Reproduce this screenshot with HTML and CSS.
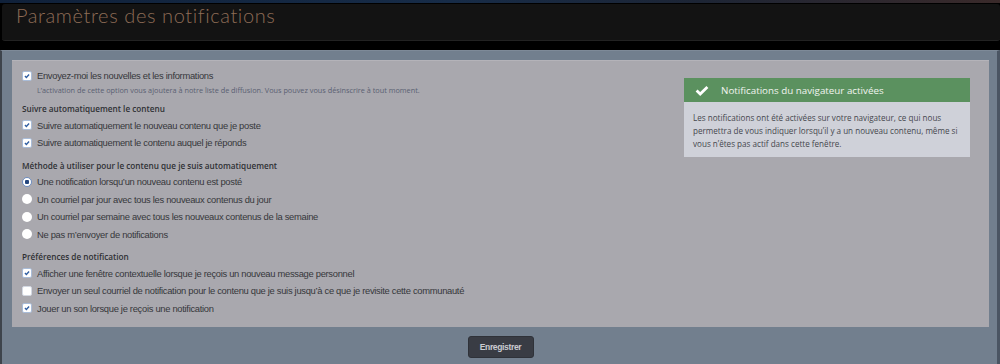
FILE: index.html
```html
<!DOCTYPE html>
<html lang="fr">
<head>
    <meta charset="UTF-8">
    <meta name="viewport" content="width=device-width, initial-scale=1.0">
    <title>Paramètres des notifications</title>
    <link rel="stylesheet" href="styles.css">
</head>
<body>
    <div class="sky"></div>

    <div class="page-head">
        <h1>Paramètres des notifications</h1>
    </div>

    <div class="settings">
        <form class="card">
            <div class="prefs">
                <div class="row">
                    <span class="box on"><svg viewBox="0 0 10 10"><path d="M2.4 5.1 L4.2 6.8 L7.6 3.1"/></svg></span>
                    <span>Envoyez-moi les nouvelles et les informations</span>
                </div>
                <div class="hint">L’activation de cette option vous ajoutera à notre liste de diffusion. Vous pouvez vous désinscrire à tout moment.</div>

                <div class="group-title">Suivre automatiquement le contenu</div>
                <div class="row">
                    <span class="box on"><svg viewBox="0 0 10 10"><path d="M2.4 5.1 L4.2 6.8 L7.6 3.1"/></svg></span>
                    <span>Suivre automatiquement le nouveau contenu que je poste</span>
                </div>
                <div class="row">
                    <span class="box on"><svg viewBox="0 0 10 10"><path d="M2.4 5.1 L4.2 6.8 L7.6 3.1"/></svg></span>
                    <span>Suivre automatiquement le contenu auquel je réponds</span>
                </div>

                <div class="group-title">Méthode à utiliser pour le contenu que je suis automatiquement</div>
                <div class="row">
                    <span class="radio on"></span>
                    <span>Une notification lorsqu’un nouveau contenu est posté</span>
                </div>
                <div class="row">
                    <span class="radio"></span>
                    <span>Un courriel par jour avec tous les nouveaux contenus du jour</span>
                </div>
                <div class="row">
                    <span class="radio"></span>
                    <span>Un courriel par semaine avec tous les nouveaux contenus de la semaine</span>
                </div>
                <div class="row">
                    <span class="radio"></span>
                    <span>Ne pas m’envoyer de notifications</span>
                </div>

                <div class="group-title">Préférences de notification</div>
                <div class="row">
                    <span class="box on"><svg viewBox="0 0 10 10"><path d="M2.4 5.1 L4.2 6.8 L7.6 3.1"/></svg></span>
                    <span>Afficher une fenêtre contextuelle lorsque je reçois un nouveau message personnel</span>
                </div>
                <div class="row">
                    <span class="box"></span>
                    <span>Envoyer un seul courriel de notification pour le contenu que je suis jusqu’à ce que je revisite cette communauté</span>
                </div>
                <div class="row">
                    <span class="box on"><svg viewBox="0 0 10 10"><path d="M2.4 5.1 L4.2 6.8 L7.6 3.1"/></svg></span>
                    <span>Jouer un son lorsque je reçois une notification</span>
                </div>
            </div>

            <div class="alert">
                <div class="alert-head">
                    <svg class="tick" viewBox="0 0 14 11"><path d="M1.6 5.6 L5.2 9 L12.4 1.9"/></svg>
                    <span>Notifications du navigateur activées</span>
                </div>
                <div class="alert-body">
                    Les notifications ont été activées sur votre navigateur, ce qui nous permettra de vous indiquer lorsqu’il y a un nouveau contenu, même si vous n’êtes pas actif dans cette fenêtre.
                </div>
            </div>
        </form>

        <div class="actions">
            <button type="button">Enregistrer</button>
        </div>
    </div>
</body>
</html>
```

FILE: styles.css
```css
body {
    margin: 0;
    background: #000;
    font-family: "Liberation Sans", Arial, sans-serif;
    height: 364px;
    overflow: hidden;
}
.sky {
    height: 3px;
    background: linear-gradient(90deg, #10213a 0%, #172c48 45%, #1d2535 70%, #3a2a2a 100%);
}
.page-head {
    height: 36px;
    margin: 1px 0 9px 2px;
    background: #131313;
    border-bottom: 1px solid #222;
    border-radius: 3px;
    overflow: hidden;
}
.page-head h1 {
    margin: 0;
    padding: 1px 0 0 14px;
    font-family: Lato, "Open Sans", sans-serif;
    font-weight: 300;
    font-size: 20px;
    line-height: 20px;
    color: #8e6c56;
    letter-spacing: 0.6px;
}
.settings {
    background: #727f8e;
    border-left: 2px solid #3e444c;
    border-right: 3px solid #4b5563;
    border-top: 1px solid #7e8a98;
    padding: 9px 8px 0 10px;
    height: 305px;
}
.card {
    display: flex;
    box-sizing: border-box;
    height: 267px;
    background: #a9a8ae;
    border-top: 1px solid #b4b3b9;
    padding: 6px 0 0 10px;
    margin: 0;
}
.prefs {
    flex: 1;
}
.row {
    display: flex;
    align-items: center;
    height: 17.5px;
    font-size: 9.4px;
    letter-spacing: -0.3px;
    color: #36373b;
}
.box,
.radio {
    width: 10px;
    height: 10px;
    margin-right: 5px;
    background: #fff;
    flex-shrink: 0;
    box-sizing: border-box;
}
.box {
    border-radius: 2px;
    border: 1px solid #d3d8e2;
}
.box.on {
    border-color: #a9bcd8;
}
.box svg {
    display: block;
    width: 8px;
    height: 8px;
}
.box svg path {
    fill: none;
    stroke: #2f5ea3;
    stroke-width: 1.7;
}
.radio {
    border-radius: 50%;
}
.radio.on {
    border: 1px solid #6f8fc2;
    background: radial-gradient(circle, #24467e 0 2px, #fff 2.5px);
}
.hint {
    font-family: "Open Sans", sans-serif;
    font-size: 7.3px;
    line-height: 10.5px;
    color: #5a6072;
    padding-left: 15px;
    margin-bottom: 3.5px;
}
.group-title {
    margin-top: 4px;
    height: 17.5px;
    line-height: 19.5px;
    font-family: "Open Sans", sans-serif;
    font-weight: 600;
    font-size: 8.2px;
    color: #2f3034;
}
.alert {
    width: 286px;
    margin: 11px 19px 0 0;
    align-self: flex-start;
    background: #cfd1d9;
}
.alert-head {
    display: flex;
    align-items: center;
    height: 24px;
    padding-left: 11px;
    background: #5b915f;
    color: #f1f4ef;
    font-family: "Open Sans", sans-serif;
    font-size: 9.8px;
}
.tick {
    width: 14px;
    height: 11px;
    margin-right: 12px;
}
.tick path {
    fill: none;
    stroke: #fff;
    stroke-width: 2.8;
}
.alert-body {
    padding: 9px 9px 7px 9px;
    font-family: "Open Sans", sans-serif;
    font-size: 8.1px;
    line-height: 13px;
    color: #45474d;
}
.actions {
    text-align: center;
    padding-top: 9px;
}
.actions button {
    width: 66px;
    height: 22px;
    background: #393c44;
    border: 1px solid #2f3239;
    border-radius: 3px;
    color: #cacbd0;
    font-family: "Liberation Sans", Arial, sans-serif;
    font-weight: bold;
    font-size: 8.5px;
    letter-spacing: -0.35px;
    padding: 0;
}
```
